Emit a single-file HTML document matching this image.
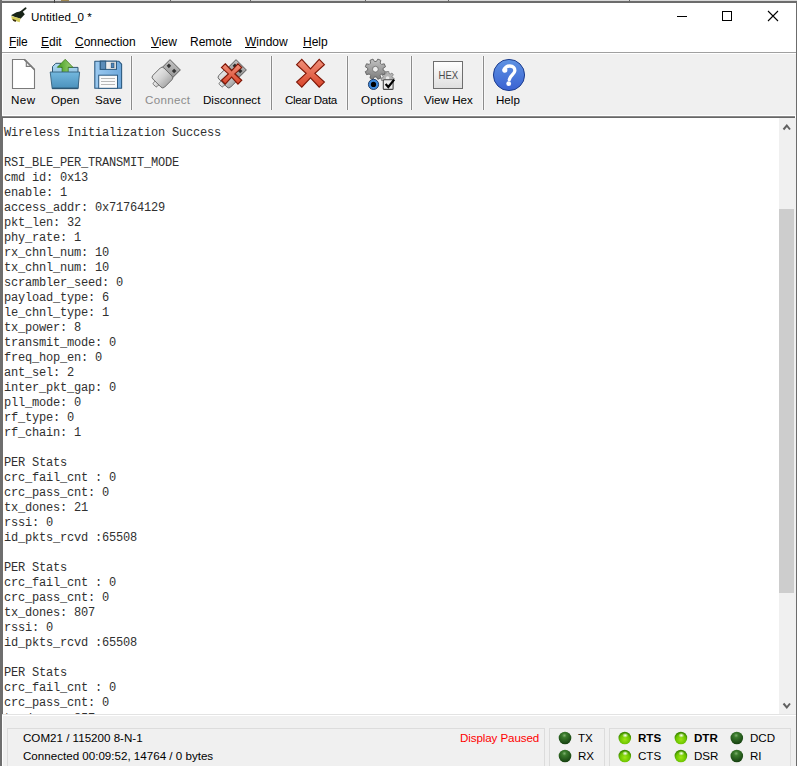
<!DOCTYPE html>
<html><head><meta charset="utf-8">
<style>
*{margin:0;padding:0;box-sizing:border-box}
html,body{width:797px;height:766px;overflow:hidden;background:#fff}
body{position:relative;font-family:"Liberation Sans",sans-serif;font-size:12px;color:#000}
.a{position:absolute}
#bgtop{left:0;top:0;width:797px;height:1px;background:#d9d9d9}
#bgleft{left:0;top:0;width:2px;height:766px;background:#6e6e6e}
#btop{left:2px;top:1px;width:795px;height:2px;background:#6c6c6c}
#bright{left:796px;top:1px;width:1px;height:765px;background:#6c6c6c}
#title{left:2px;top:3px;width:794px;height:27px;background:#fff}
#ttext{left:31px;top:9px;font-size:11.6px;letter-spacing:0.08px;line-height:16px;white-space:nowrap}
#menu{left:2px;top:30px;width:794px;height:22px;background:#fff}
.mi{top:34px;font-size:12px;line-height:16px;white-space:nowrap}
.mi u{text-decoration:underline;text-underline-offset:1px}
#msep{left:2px;top:52px;width:794px;height:1px;background:#a0a0a0}
#tool{left:2px;top:53px;width:794px;height:63px;background:#f0f0f0;border-left:1px solid #fff;border-top:1px solid #fff;border-bottom:1px solid #fff}
#tline{left:2px;top:116px;width:793px;height:2px;background:linear-gradient(#8a8a8a 0 50%,#666 50% 100%)}
.sep{top:56px;width:1px;height:54px;background:#8c8c8c;box-shadow:-1px 0 0 #f8f8f8,1px 0 0 #f8f8f8}
.lbl{top:92px;font-size:11.6px;line-height:16px;white-space:nowrap}
#txt{left:2px;top:118px;width:777px;height:596px;background:#fff;overflow:hidden;border-left:1px solid #6e6e6e}
#pre{left:1px;top:8px;font-family:"Liberation Mono",monospace;font-size:12px;letter-spacing:-0.2px;line-height:15px;white-space:pre;color:#303030}
#sb{left:779px;top:118px;width:17px;height:596px;background:#f0f0f0}
#thumb{left:779px;top:209px;width:15px;height:384px;background:#cdcdcd}
#status{left:2px;top:714px;width:794px;height:52px;background:#f0f0f0;border-top:1px solid #e3e3e3}
#status2{left:2px;top:715px;width:794px;height:1px;background:#fff}
#status3{left:2px;top:715px;width:1px;height:51px;background:#fff}
.pan{top:728px;height:40px;border:1px solid #dcdcdc}
.st{font-size:11.6px;line-height:16px;white-space:nowrap}
</style></head><body>
<div class="a" id="bgtop"></div>
<div class="a" id="title"></div>
<div class="a" id="menu"></div>
<div class="a" id="tool"></div>
<div class="a" id="txt"><div class="a" id="pre">Wireless Initialization Success

RSI_BLE_PER_TRANSMIT_MODE
cmd id: 0x13
enable: 1
access_addr: 0x71764129
pkt_len: 32
phy_rate: 1
rx_chnl_num: 10
tx_chnl_num: 10
scrambler_seed: 0
payload_type: 6
le_chnl_type: 1
tx_power: 8
transmit_mode: 0
freq_hop_en: 0
ant_sel: 2
inter_pkt_gap: 0
pll_mode: 0
rf_type: 0
rf_chain: 1

PER Stats
crc_fail_cnt : 0
crc_pass_cnt: 0
tx_dones: 21
rssi: 0
id_pkts_rcvd :65508

PER Stats
crc_fail_cnt : 0
crc_pass_cnt: 0
tx_dones: 807
rssi: 0
id_pkts_rcvd :65508

PER Stats
crc_fail_cnt : 0
crc_pass_cnt: 0
<span style="position:relative;top:1px">tx_dones: 857</span></div></div>
<div class="a" id="sb"></div>
<div class="a" id="thumb"></div>
<div class="a" id="status"></div>
<div class="a" id="status2"></div>
<div class="a" id="status3"></div>
<div class="a" id="bgleft"></div>
<div class="a" id="btop"></div>
<div class="a" id="bright"></div>

<div class="a" id="ttext">Untitled_0 *</div>
<div class="a mi" style="left:9px;letter-spacing:-0.2px"><u>F</u>ile</div>
<div class="a mi" style="left:41px"><u>E</u>dit</div>
<div class="a mi" style="left:75px"><u>C</u>onnection</div>
<div class="a mi" style="left:151px"><u>V</u>iew</div>
<div class="a mi" style="left:190px">Remote</div>
<div class="a mi" style="left:245px"><u>W</u>indow</div>
<div class="a mi" style="left:303px"><u>H</u>elp</div>
<div class="a" id="msep"></div>
<div class="a" id="tline"></div>

<div class="a sep" style="left:131px"></div>
<div class="a sep" style="left:271px"></div>
<div class="a sep" style="left:347px"></div>
<div class="a sep" style="left:411px"></div>
<div class="a sep" style="left:483px"></div>

<div class="a lbl" style="left:11px;letter-spacing:0.5px">New</div>
<div class="a lbl" style="left:51px">Open</div>
<div class="a lbl" style="left:95px">Save</div>
<div class="a lbl" style="left:145px;color:#8c8c8c;letter-spacing:0.3px">Connect</div>
<div class="a lbl" style="left:203px">Disconnect</div>
<div class="a lbl" style="left:285px;letter-spacing:-0.35px">Clear Data</div>
<div class="a lbl" style="left:361px;letter-spacing:0.3px">Options</div>
<div class="a lbl" style="left:424px">View Hex</div>
<div class="a lbl" style="left:496px">Help</div>

<div class="a pan" style="left:7px;width:538px"></div>
<div class="a pan" style="left:549px;width:56px"></div>
<div class="a pan" style="left:609px;width:182px"></div>
<div class="a st" style="left:23px;top:730px">COM21 / 115200 8-N-1</div>
<div class="a st" style="left:23px;top:748px">Connected 00:09:52, 14764 / 0 bytes</div>
<div class="a st" style="left:460px;top:730px;color:#f00;letter-spacing:-0.1px">Display Paused</div>
<div class="a st" style="left:578px;top:730px">TX</div>
<div class="a st" style="left:578px;top:748px">RX</div>
<div class="a st" style="left:638px;top:730px;font-weight:bold">RTS</div>
<div class="a st" style="left:638px;top:748px">CTS</div>
<div class="a st" style="left:694px;top:730px;font-weight:bold">DTR</div>
<div class="a st" style="left:694px;top:748px">DSR</div>
<div class="a st" style="left:750px;top:730px">DCD</div>
<div class="a st" style="left:750px;top:748px">RI</div>
<svg class="a" style="left:0;top:0" width="797" height="766" viewBox="0 0 797 766">
<defs>
 <linearGradient id="gHead" x1="0" y1="0" x2="1" y2="1"><stop offset="0" stop-color="#c4c4c4"/><stop offset="1" stop-color="#8e8e8e"/></linearGradient>
 <linearGradient id="gBody" x1="0" y1="0" x2="1" y2="0"><stop offset="0" stop-color="#e6e6e6"/><stop offset="0.5" stop-color="#cfcfcf"/><stop offset="1" stop-color="#a6a6a6"/></linearGradient>
 <linearGradient id="gTab" x1="0" y1="0" x2="1" y2="0"><stop offset="0" stop-color="#f0f0f0"/><stop offset="1" stop-color="#c8c8c8"/></linearGradient>
 <linearGradient id="gRed" x1="0" y1="0" x2="0" y2="1"><stop offset="0" stop-color="#f0907a"/><stop offset="1" stop-color="#d9452a"/></linearGradient>
 <linearGradient id="gFold" x1="0" y1="0" x2="0" y2="1"><stop offset="0" stop-color="#b4def6"/><stop offset="1" stop-color="#5a96be"/></linearGradient>
 <linearGradient id="gFront" x1="0" y1="0" x2="0" y2="1"><stop offset="0" stop-color="#74b8de"/><stop offset="1" stop-color="#4a90bb"/></linearGradient>
 <linearGradient id="gArrow" x1="0" y1="0" x2="1" y2="0"><stop offset="0" stop-color="#3f9a1c"/><stop offset="1" stop-color="#a4d67a"/></linearGradient>
 <linearGradient id="gDisk" x1="0" y1="0" x2="1" y2="0"><stop offset="0" stop-color="#9ccaf0"/><stop offset="1" stop-color="#6ea8dc"/></linearGradient>
 <linearGradient id="gShut" x1="0" y1="0" x2="1" y2="0"><stop offset="0" stop-color="#ffffff"/><stop offset="1" stop-color="#d8d8d8"/></linearGradient>
 <linearGradient id="gGear" x1="0" y1="0" x2="0" y2="1"><stop offset="0" stop-color="#c2c2c2"/><stop offset="1" stop-color="#7c7c7c"/></linearGradient>
 <linearGradient id="gHex" x1="0" y1="0" x2="0" y2="1"><stop offset="0" stop-color="#ffffff"/><stop offset="1" stop-color="#dedede"/></linearGradient>
 <linearGradient id="gHelp" x1="0" y1="0" x2="0" y2="1"><stop offset="0" stop-color="#5f93e2"/><stop offset="1" stop-color="#3a62d2"/></linearGradient>
 <radialGradient id="gLedD" cx="0.45" cy="0.3" r="0.7"><stop offset="0" stop-color="#7fb070"/><stop offset="0.25" stop-color="#3a7a2c"/><stop offset="1" stop-color="#153f10"/></radialGradient>
 <radialGradient id="gLedL" cx="0.5" cy="0.62" r="0.55"><stop offset="0" stop-color="#9ee614"/><stop offset="0.7" stop-color="#6cc400"/><stop offset="1" stop-color="#3e8a00"/></radialGradient>
 <radialGradient id="gHi" cx="0.5" cy="0.5" r="0.5"><stop offset="0" stop-color="#fff" stop-opacity="1"/><stop offset="1" stop-color="#fff" stop-opacity="0"/></radialGradient>
</defs>
<!-- bg ticks -->
<rect x="54" y="0" width="1" height="3" fill="#444"/>
<rect x="170" y="0" width="1" height="1" fill="#666"/>
<rect x="250" y="0" width="1" height="1" fill="#666"/>
<rect x="365" y="0" width="1" height="1" fill="#666"/>
<rect x="448" y="0" width="1" height="1" fill="#666"/>
<rect x="629" y="0" width="1" height="1" fill="#666"/>
<rect x="61" y="0" width="8" height="1" fill="#a08850"/>
<!-- window buttons -->
<rect x="677" y="16" width="10" height="1" fill="#000"/>
<rect x="722.5" y="11.5" width="9" height="9" fill="none" stroke="#000" stroke-width="1"/>
<path d="M768,11 L778,21 M778,11 L768,21" stroke="#000" stroke-width="1.1"/>
<!-- New -->
<path d="M12.5,59.5 H24.5 L34.5,69.5 V88.5 H12.5 Z" fill="#fff" stroke="#7a7a7a" stroke-width="1.1"/>
<path d="M26.3,60.8 V66.4 H32" fill="#f6f6f6" stroke="#7a7a7a" stroke-width="1.1"/>
<path d="M24.3,59.4 L34.5,69.6" fill="none" stroke="#7a7a7a" stroke-width="1.5"/>
<!-- Open -->
<path d="M52.5,88.5 V66.6 L55.8,63.3 H61 V67.4 H78 V88.5 Z" fill="url(#gFold)" stroke="#2f5570" stroke-width="1"/>
<path d="M65.2,59.3 L72.9,67.3 H68.2 V73 H62.1 V67.3 H57.3 Z" fill="url(#gArrow)" stroke="#3b7a1a" stroke-width="0.8"/>
<path d="M50.2,72 H79.6 L78,88.7 H52.2 Z" fill="url(#gFront)" stroke="#33607e" stroke-width="0.9"/>
<rect x="52.5" y="87.6" width="25.2" height="1.4" fill="#2c5572"/>
<!-- Save -->
<path d="M94.8,61.2 H118.7 L121.6,64.1 V88.3 H94.8 Z" fill="url(#gDisk)" stroke="#2d5a80" stroke-width="1.1" stroke-linejoin="round"/>
<rect x="100.3" y="61.2" width="16.2" height="8.2" fill="url(#gShut)" stroke="#2d5a80" stroke-width="1"/>
<rect x="100.3" y="61.2" width="5.4" height="8.2" fill="#5b8cb8" stroke="#2d5a80" stroke-width="1"/>
<rect x="111.3" y="63.2" width="2.6" height="4.4" fill="#4a86c0" stroke="#2d5a80" stroke-width="0.8"/>
<rect x="98.7" y="75.2" width="18.8" height="13.1" fill="#fafafa" stroke="#2d5a80" stroke-width="1"/>
<rect x="101" y="78" width="14" height="1" fill="#b8b8b8"/>
<rect x="101" y="81" width="14" height="1" fill="#b8b8b8"/>
<rect x="101" y="84" width="14" height="1" fill="#b8b8b8"/>
<!-- Connect (disabled) -->
<g opacity="0.95"><g transform="translate(162.6,77.4) rotate(45)">
  <rect x="-2.6" y="6.5" width="5.2" height="5" rx="1.2" fill="url(#gTab)" stroke="#6a6a6a" stroke-width="0.9"/>
  <rect x="-7.3" y="-17.8" width="14.6" height="11" fill="url(#gHead)" stroke="#505050" stroke-width="0.9"/>
  <rect x="-5.3" y="-14.2" width="3.2" height="3.2" fill="#2a2a2a"/>
  <rect x="2.1" y="-14.2" width="3.2" height="3.2" fill="#2a2a2a"/>
  <rect x="-8.3" y="-7.6" width="16.6" height="15.6" rx="2.6" fill="url(#gBody)" stroke="#5e5e5e" stroke-width="0.9"/>
</g></g>
<!-- Disconnect -->
<g transform="translate(228.6,77.4) rotate(45)">
  <rect x="-2.6" y="6.5" width="5.2" height="5" rx="1.2" fill="url(#gTab)" stroke="#6a6a6a" stroke-width="0.9"/>
  <rect x="-7.3" y="-17.8" width="14.6" height="11" fill="url(#gHead)" stroke="#505050" stroke-width="0.9"/>
  <rect x="-5.3" y="-14.2" width="3.2" height="3.2" fill="#2a2a2a"/>
  <rect x="2.1" y="-14.2" width="3.2" height="3.2" fill="#2a2a2a"/>
  <rect x="-8.3" y="-7.6" width="16.6" height="15.6" rx="2.6" fill="url(#gBody)" stroke="#5e5e5e" stroke-width="0.9"/>
</g>
<polygon points="225.25,63.75 231.60,70.69 237.95,63.75 241.75,67.55 234.81,73.90 241.75,80.25 237.95,84.05 231.60,77.11 225.25,84.05 221.45,80.25 228.39,73.90 221.45,67.55" fill="url(#gRed)" stroke="#7e1606" stroke-width="1.15" stroke-linejoin="miter"/>
<!-- Clear Data -->
<polygon points="301.80,59.45 310.50,68.95 319.20,59.45 324.40,64.65 314.90,73.35 324.40,82.05 319.20,87.25 310.50,77.75 301.80,87.25 296.60,82.05 306.10,73.35 296.60,64.65" fill="url(#gRed)" stroke="#7e1606" stroke-width="1.15" stroke-linejoin="miter"/>
<!-- Options -->
<path d="M392.38,77.61 L394.19,78.30 L393.67,80.59 L391.74,80.42 L390.89,81.50 L391.48,83.34 L389.36,84.36 L388.29,82.75 L386.91,82.75 L385.84,84.36 L383.72,83.34 L384.31,81.50 L383.46,80.42 L381.53,80.59 L381.01,78.30 L382.82,77.61 L383.12,76.27 L381.79,74.87 L383.26,73.03 L384.92,74.02 L386.16,73.42 L386.42,71.51 L388.78,71.51 L389.04,73.42 L390.28,74.02 L391.94,73.03 L393.41,74.87 L392.08,76.27Z" fill="#b4b4b4" stroke="#7a7a7a" stroke-width="0.8"/>
<circle cx="387.6" cy="78" r="1.8" fill="#e8e8e8"/>
<path d="M383.14,70.18 L385.51,71.63 L384.27,74.63 L381.56,73.98 L380.18,75.36 L380.83,78.07 L377.83,79.31 L376.38,76.94 L374.42,76.94 L372.97,79.31 L369.97,78.07 L370.62,75.36 L369.24,73.98 L366.53,74.63 L365.29,71.63 L367.66,70.18 L367.66,68.22 L365.29,66.77 L366.53,63.77 L369.24,64.42 L370.62,63.04 L369.97,60.33 L372.97,59.09 L374.42,61.46 L376.38,61.46 L377.83,59.09 L380.83,60.33 L380.18,63.04 L381.56,64.42 L384.27,63.77 L385.51,66.77 L383.14,68.22Z" fill="url(#gGear)" stroke="#606060" stroke-width="0.9"/>
<circle cx="375.4" cy="69.2" r="2.9" fill="#eeeeee" stroke="#666" stroke-width="0.8"/>
<circle cx="373.5" cy="84.4" r="5.1" fill="#3d88da" stroke="#1a3660" stroke-width="0.9"/>
<circle cx="373.5" cy="84.4" r="2.6" fill="#000"/>
<rect x="383.3" y="79.8" width="9.8" height="9.6" rx="1" fill="#ececec" stroke="#4a4a4a" stroke-width="1.1"/>
<path d="M385.6,84 L388.3,87 L394.2,79.6" fill="none" stroke="#000" stroke-width="2.2"/>
<!-- View Hex -->
<rect x="433.5" y="61.5" width="29" height="27" fill="url(#gHex)" stroke="#6e6e6e" stroke-width="1"/>
<text x="448.4" y="78.7" text-anchor="middle" font-family="Liberation Sans" font-size="10.6" textLength="19.6" lengthAdjust="spacingAndGlyphs" fill="#4a4a4a">HEX</text>
<!-- Help -->
<circle cx="509" cy="75" r="15.6" fill="url(#gHelp)" stroke="#1f3f8f" stroke-width="1"/>
<path d="M504.5,70.8 C503.8,67.3 507.3,65.9 509.9,66 C513.2,66.1 515,68.2 514.8,70.8 C514.5,74 510.4,75.2 509.3,79.6" fill="none" stroke="#fff" stroke-width="3.3" stroke-linecap="round"/>
<circle cx="504.8" cy="70" r="2.6" fill="#fff"/>
<circle cx="508.7" cy="83.7" r="2.4" fill="#fff"/>
<!-- scrollbar arrows -->
<path d="M783.5,129.5 L786.8,125.5 L790,129.5" fill="none" stroke="#606060" stroke-width="2"/>
<path d="M783.5,703.5 L786.8,707.5 L790,703.5" fill="none" stroke="#606060" stroke-width="2"/>
<!-- LEDs -->
<circle cx="565" cy="738" r="6.3" fill="url(#gLedD)"/>
<circle cx="565" cy="756" r="6.3" fill="url(#gLedD)"/>
<circle cx="624.8" cy="738" r="6.3" fill="url(#gLedL)"/><ellipse cx="625.1999999999999" cy="735.4" rx="3" ry="2.4" fill="url(#gHi)"/>
<circle cx="624.8" cy="756" r="6.3" fill="url(#gLedL)"/><ellipse cx="625.1999999999999" cy="753.4" rx="3" ry="2.4" fill="url(#gHi)"/>
<circle cx="680.9" cy="738" r="6.3" fill="url(#gLedL)"/><ellipse cx="681.3" cy="735.4" rx="3" ry="2.4" fill="url(#gHi)"/>
<circle cx="680.9" cy="756" r="6.3" fill="url(#gLedL)"/><ellipse cx="681.3" cy="753.4" rx="3" ry="2.4" fill="url(#gHi)"/>
<circle cx="736.8" cy="738" r="6.3" fill="url(#gLedD)"/>
<circle cx="736.8" cy="756" r="6.3" fill="url(#gLedD)"/>
<!-- title icon -->
<path d="M20.6,12.2 L25.6,8.2" stroke="#1a241a" stroke-width="1.8" stroke-linecap="round"/>
<polygon points="11,15.3 16.5,12.3 22.2,11 24.8,14.3 20.6,18.8 15.5,17.2" fill="#182418"/>
<polygon points="11.2,16 20.6,18.6 19.6,22.2 12,19.8" fill="#d4cc5a"/>
<polygon points="12.6,18.9 16.2,20.2 15.6,21.9 13,20.8" fill="#3a2e10"/>
</svg>
</body></html>
